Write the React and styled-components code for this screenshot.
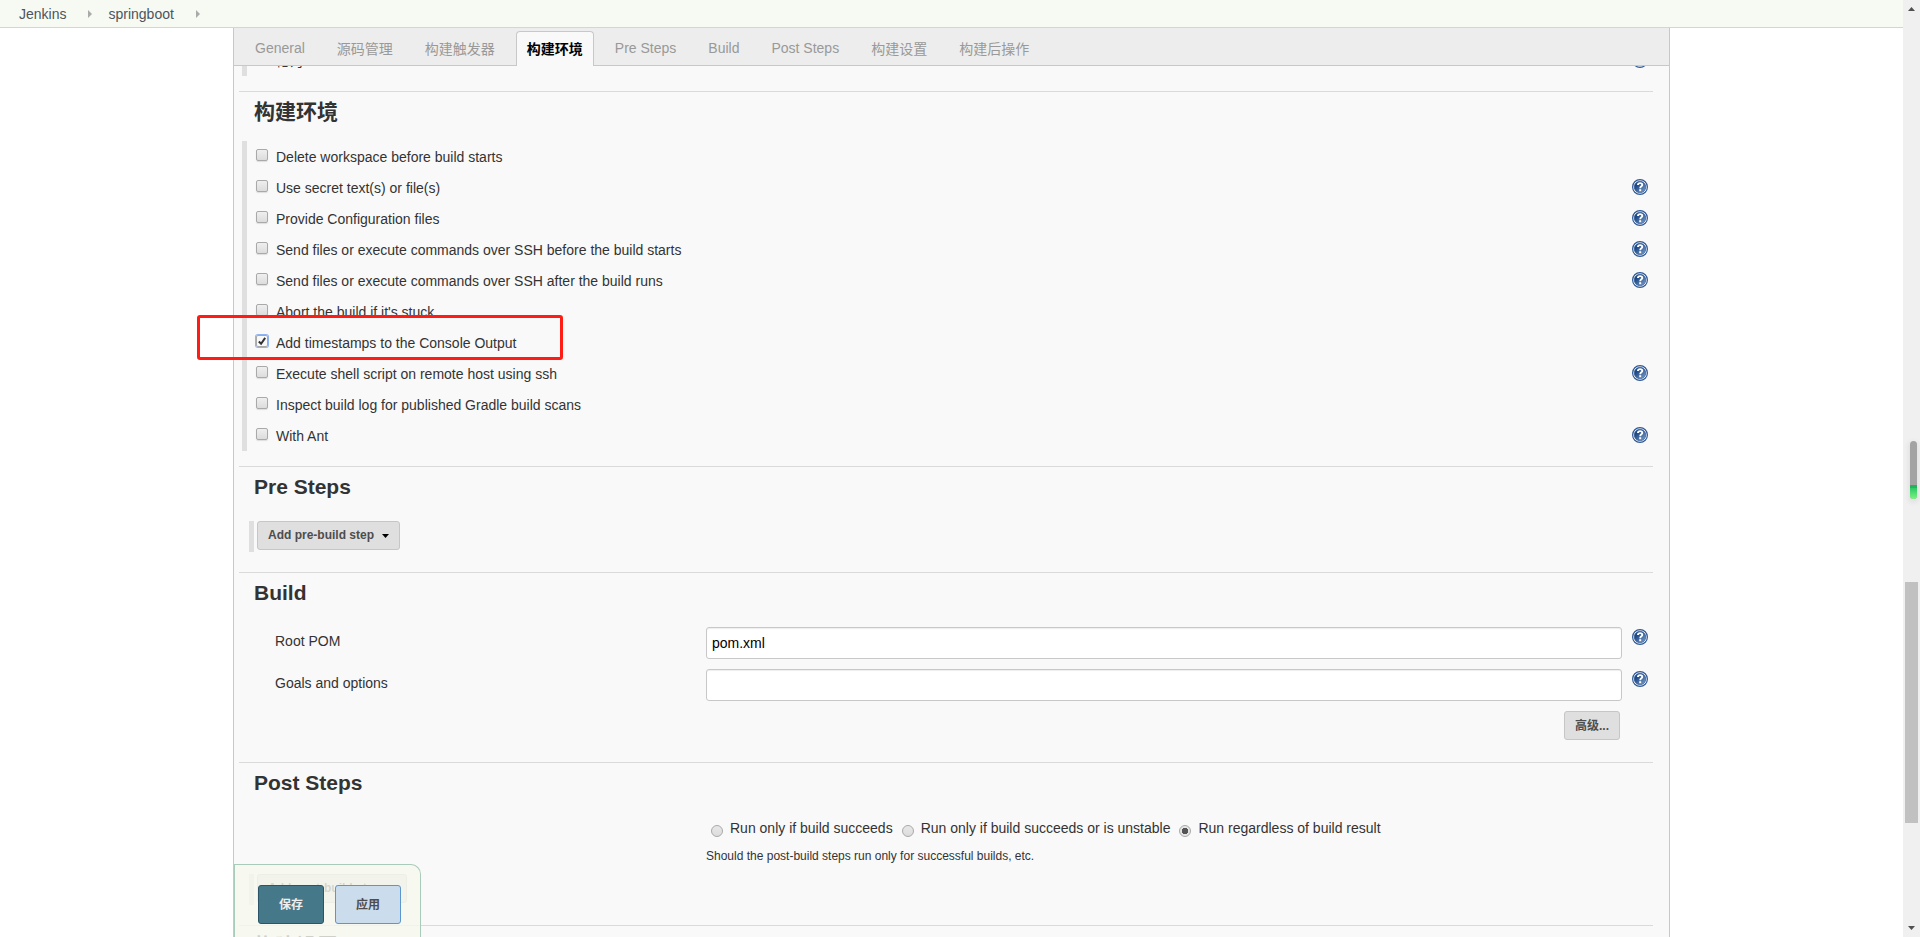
import React, { useState } from "react";
import styled, { createGlobalStyle } from "styled-components";

const tabs = [
  "General",
  "源码管理",
  "构建触发器",
  "构建环境",
  "Pre Steps",
  "Build",
  "Post Steps",
  "构建设置",
  "构建后操作",
];

const envOptions = [
  { id: "delete-ws", label: "Delete workspace before build starts" },
  { id: "secrets", label: "Use secret text(s) or file(s)", help: true },
  { id: "config-files", label: "Provide Configuration files", help: true },
  {
    id: "ssh-before",
    label: "Send files or execute commands over SSH before the build starts",
    help: true,
  },
  {
    id: "ssh-after",
    label: "Send files or execute commands over SSH after the build runs",
    help: true,
  },
  { id: "abort-stuck", label: "Abort the build if it's stuck" },
  {
    id: "timestamps",
    label: "Add timestamps to the Console Output",
    marked: true,
  },
  {
    id: "remote-shell",
    label: "Execute shell script on remote host using ssh",
    help: true,
  },
  {
    id: "gradle-scans",
    label: "Inspect build log for published Gradle build scans",
  },
  { id: "ant", label: "With Ant", help: true },
];

const runConditions = [
  { id: "success", label: "Run only if build succeeds" },
  { id: "unstable", label: "Run only if build succeeds or is unstable" },
  { id: "always", label: "Run regardless of build result" },
];

const HelpIcon = () => (
  <svg width="16" height="16" viewBox="0 0 16 16" aria-hidden="true">
    <defs>
      <linearGradient id="helpFill" x1="0" y1="0" x2="1" y2="1">
        <stop offset="0.3" stopColor="#204a87" />
        <stop offset="1" stopColor="#7fa3d0" />
      </linearGradient>
    </defs>
    <circle cx="8" cy="8" r="7.4" fill="#fff" stroke="#2f5896" strokeWidth="1.2" />
    <circle cx="8" cy="8" r="5.8" fill="url(#helpFill)" stroke="#24508f" strokeWidth="0.6" />
    <path
      d="M5.9 6.1C5.9 4.7 6.8 4.1 8.1 4.1C9.4 4.1 10.3 4.8 10.3 5.9C10.3 7.3 8.2 7.3 8.2 9.2"
      fill="none"
      stroke="#fff"
      strokeWidth="1.9"
    />
    <rect x="7.2" y="10.2" width="2" height="2" fill="#fff" />
  </svg>
);

const Help = ({ label }) => (
  <HelpButton type="button" aria-label={`Help: ${label}`}>
    <HelpIcon />
  </HelpButton>
);

const Arrow = ({ up, color = "#505050" }) => (
  <svg width="7" height="4" viewBox="0 0 7 4" aria-hidden="true">
    <path d={up ? "M0 4L3.5 0L7 4Z" : "M0 0L3.5 4L7 0Z"} fill={color} />
  </svg>
);

const App = () => {
  const [activeTab, setActiveTab] = useState("构建环境");
  const [checked, setChecked] = useState({ timestamps: true });
  const [runCondition, setRunCondition] = useState("always");
  const [pom, setPom] = useState("pom.xml");
  const [goals, setGoals] = useState("");

  const toggle = (id) => setChecked({ ...checked, [id]: !checked[id] });

  return (
    <>
      <GlobalStyle />
      <Screen>
        <Page>
          <Breadcrumbs>
            <a href="#jenkins">Jenkins</a>
            <Separator />
            <a href="#springboot">springboot</a>
            <Separator />
          </Breadcrumbs>

          <Panel>
            <TabBar>
              {tabs.map((tab) => (
                <Tab
                  key={tab}
                  type="button"
                  $active={tab === activeTab}
                  onClick={() => setActiveTab(tab)}
                >
                  {tab}
                </Tab>
              ))}
            </TabBar>

            <Config>
              <ScrolledRow>
                <OptionRow>
                  <OptionLabel as="span">轮询 SCM</OptionLabel>
                  <Help label="轮询 SCM" />
                </OptionRow>
              </ScrolledRow>

              <Section>
                <h2>构建环境</h2>
                <OptionGroup>
                  {envOptions.map(({ id, label, help, marked }) => (
                    <OptionRow key={id}>
                      <Checkbox
                        id={id}
                        type="checkbox"
                        $focused={marked}
                        checked={!!checked[id]}
                        onChange={() => toggle(id)}
                      />
                      <OptionLabel htmlFor={id}>{label}</OptionLabel>
                      {help && <Help label={label} />}
                      {marked && <Marker />}
                    </OptionRow>
                  ))}
                </OptionGroup>
              </Section>

              <Section>
                <h2>Pre Steps</h2>
                <StepGroup>
                  <GreyButton type="button">
                    Add pre-build step
                    <Arrow color="#000" />
                  </GreyButton>
                </StepGroup>
              </Section>

              <Section>
                <h2>Build</h2>
                <Fields>
                  <FieldRow>
                    <FieldLabel htmlFor="pom">Root POM</FieldLabel>
                    <TextInput
                      id="pom"
                      type="text"
                      value={pom}
                      onChange={(e) => setPom(e.target.value)}
                    />
                    <Help label="Root POM" />
                  </FieldRow>
                  <FieldRow>
                    <FieldLabel htmlFor="goals">Goals and options</FieldLabel>
                    <TextInput
                      id="goals"
                      type="text"
                      value={goals}
                      onChange={(e) => setGoals(e.target.value)}
                    />
                    <Help label="Goals and options" />
                  </FieldRow>
                  <Advanced>
                    <GreyButton type="button">高级...</GreyButton>
                  </Advanced>
                </Fields>
              </Section>

              <Section>
                <h2>Post Steps</h2>
                <Conditions>
                  {runConditions.map(({ id, label }) => (
                    <Condition key={id}>
                      <Radio
                        type="radio"
                        name="runCondition"
                        checked={runCondition === id}
                        onChange={() => setRunCondition(id)}
                      />
                      {label}
                    </Condition>
                  ))}
                </Conditions>
                <Hint>
                  Should the post-build steps run only for successful builds,
                  etc.
                </Hint>
                <StepGroup>
                  <GreyButton type="button">
                    Add post-build step
                    <Arrow color="#000" />
                  </GreyButton>
                </StepGroup>
              </Section>

              <Section>
                <h2>构建设置</h2>
              </Section>
            </Config>

            <SaveBar>
              <SaveButton type="button" $primary>
                保存
              </SaveButton>
              <SaveButton type="button">应用</SaveButton>
            </SaveBar>
          </Panel>
        </Page>

        <Scrollbar>
          <Arrow up />
          <Thumb />
          <Arrow />
          <Meter>
            <MeterLevel />
          </Meter>
        </Scrollbar>
      </Screen>
    </>
  );
};

export default App;

const GlobalStyle = createGlobalStyle`
  * {
    box-sizing: border-box;
  }

  body {
    margin: 0;
    background: #fff;
    color: #333;
    font-family: "Liberation Sans", "Noto Sans CJK SC", sans-serif;
    font-size: 14px;
    line-height: 20px;
  }

  button,
  input {
    margin: 0;
    font-family: inherit;
  }
`;

const Screen = styled.div`
  display: flex;
  height: 100vh;
  overflow: hidden;
`;

const Page = styled.div`
  flex: 1;
  min-width: 0;
  display: flex;
  flex-direction: column;
`;

const Breadcrumbs = styled.nav`
  flex: none;
  display: flex;
  align-items: center;
  height: 28px;
  padding: 0 19px;
  background: #f6faf2;
  border-bottom: 1px solid #d3d7cf;

  a {
    color: #4d545d;
    text-decoration: none;
  }
`;

const Separator = styled.span`
  margin: 0 16px 0 22px;
  border: 4px solid transparent;
  border-left-color: #aaa;
  border-right: none;
`;

const Panel = styled.main`
  position: relative;
  flex: 1;
  min-height: 0;
  display: flex;
  flex-direction: column;
  margin: 0 233px;
  background: #f9f9f9;
  border: 1px solid #c8c8c8;
  border-width: 0 1px;
`;

const TabBar = styled.div`
  flex: none;
  display: flex;
  align-items: flex-end;
  gap: 10px;
  height: 38px;
  padding: 0 10px;
  background: #ededed;
  border-bottom: 1px solid #c8c8c8;
`;

const Tab = styled.button`
  height: 35px;
  margin-bottom: -1px;
  padding: 0 10px 3px;
  background: ${({ $active }) => ($active ? "#f9f9f9" : "transparent")};
  border: 1px solid ${({ $active }) => ($active ? "#c8c8c8" : "transparent")};
  border-bottom: none;
  border-radius: 4px 4px 0 0;
  color: ${({ $active }) => ($active ? "#000" : "#999")};
  font-size: 14px;
  font-weight: ${({ $active }) => ($active ? "bold" : "normal")};
`;

const Config = styled.form`
  flex: 1;
  min-height: 0;
  overflow-y: clip;
  padding: 0 16px 0 5px;
`;

const OptionRow = styled.div`
  position: relative;
  display: flex;
  align-items: flex-start;
  height: 31px;
  padding: 6px 5px 0 9px;
`;

const ScrolledRow = styled.div`
  display: flex;
  align-items: flex-end;
  height: 10px;
  margin-left: 3px;
  overflow: hidden;
  border-left: 5px solid #dfdfdf;

  ${OptionRow} {
    flex: 1;
    padding-left: 28px;
  }
`;

const Section = styled.section`
  margin-top: 15px;
  border-top: 1px solid #dadada;

  h2 {
    margin: 0;
    padding: 5px 15px 14px;
    font-size: 21px;
    line-height: 30px;
  }
`;

const OptionGroup = styled.div`
  margin-left: 3px;
  border-left: 5px solid #dfdfdf;
`;

const OptionLabel = styled.label`
  flex: 1;
`;

const Checkbox = styled.input`
  appearance: none;
  width: 12px;
  height: 12px;
  margin: 2px 8px 0 0;
  background: linear-gradient(#efefef, #dcdcdc);
  border: 1px solid #a9a9a9;
  border-radius: 2px;
  box-shadow: ${({ $focused }) =>
    $focused ? "0 0 0 1px #8fb4f2" : "0 1px 1px #ddd"};

  &:checked {
    background-image: url("data:image/svg+xml,%3Csvg xmlns='http://www.w3.org/2000/svg' viewBox='0 0 11 11'%3E%3Cpath d='M2 6L4.5 8.5L9 2' fill='none' stroke='%23333' stroke-width='2.2'/%3E%3C/svg%3E");
  }
`;

const HelpButton = styled.button`
  flex: none;
  width: 16px;
  height: 16px;
  margin-top: 1px;
  padding: 0;
  background: none;
  border: none;

  svg {
    display: block;
  }
`;

const Marker = styled.div`
  position: absolute;
  top: -12px;
  left: -50px;
  width: 366px;
  height: 45px;
  border: 3px solid #ff1c14;
  border-radius: 3px;
  pointer-events: none;
`;

const StepGroup = styled.div`
  display: flex;
  height: 31px;
  margin: 5px 0 20px 10px;
  padding-left: 3px;
  border-left: 5px solid #dfdfdf;
`;

const GreyButton = styled.button`
  display: flex;
  align-items: center;
  gap: 8px;
  height: 29px;
  padding: 0 10px 2px;
  background: #dfdfdf;
  border: 1px solid #c6c6c6;
  border-radius: 3px;
  color: #4d4d4d;
  font-size: 12px;
  font-weight: bold;

  svg {
    margin-top: 2px;
  }
`;

const Fields = styled.div`
  display: flex;
  flex-direction: column;
  gap: 10px;
  margin-bottom: 22px;
  padding: 5px 5px 0 36px;
`;

const FieldRow = styled.div`
  display: grid;
  grid-template-columns: 431px 1fr 16px;
  align-items: start;

  ${HelpButton} {
    margin-top: 2px;
  }
`;

const FieldLabel = styled.label`
  padding-top: 4px;
`;

const TextInput = styled.input`
  height: 32px;
  margin-right: 10px;
  padding: 0 5px;
  background: #fff;
  border: 1px solid #c8c8c8;
  border-radius: 3px;
  box-shadow: inset 0 1px 1px #eee;
  color: #000;
  font-size: 14px;
`;

const Advanced = styled.div`
  display: flex;
  justify-content: flex-end;
  margin-right: 28px;
`;

const Conditions = styled.div`
  display: flex;
  align-items: center;
  gap: 9px;
  margin: 6px 0 0 472px;
`;

const Condition = styled.label`
  display: flex;
  align-items: flex-start;
  gap: 7px;
`;

const Radio = styled.input`
  appearance: none;
  width: 12px;
  height: 12px;
  margin-top: 7px;
  background: ${({ checked }) =>
    checked
      ? "radial-gradient(circle, #555 0 3px, #e6e6e6 3px)"
      : "linear-gradient(#e8e8e8, #dcdcdc)"};
  border: 1px solid #a9a9a9;
  border-radius: 50%;
`;

const Hint = styled.p`
  margin: 9px 0 9px 467px;
  font-size: 12px;
  line-height: 18px;
`;

const SaveBar = styled.div`
  position: absolute;
  left: 0;
  bottom: 0;
  display: flex;
  gap: 11px;
  padding: 20px 19px 13px 23px;
  background: rgba(246, 249, 239, 0.8);
  border: 1px solid #a9cbb9;
  border-bottom: none;
  border-radius: 0 10px 0 0;
`;

const SaveButton = styled.button`
  width: 66px;
  height: 39px;
  padding: 0 0 3px;
  background: ${({ $primary }) => ($primary ? "#457889" : "#cbdced")};
  border: 1px solid ${({ $primary }) => ($primary ? "#2b5566" : "#5c96cf")};
  border-radius: 3px;
  color: ${({ $primary }) => ($primary ? "#eee" : "#4d4d4d")};
  font-size: 12px;
  font-weight: bold;
`;

const Scrollbar = styled.div`
  position: relative;
  flex: none;
  display: flex;
  flex-direction: column;
  align-items: center;
  justify-content: space-between;
  width: 17px;
  padding: 7px 0;
  background: #f0f0f0;
`;

const Thumb = styled.div`
  width: 13px;
  height: 241px;
  margin-top: 468px;
  background: #c1c1c1;
`;

const Meter = styled.div`
  position: absolute;
  top: 441px;
  right: 3px;
  display: flex;
  align-items: flex-end;
  width: 7px;
  height: 58px;
  overflow: hidden;
  background: #a3a3a3;
  border-radius: 4px;
  box-shadow: 0 2px 4px 2px #e2e2e2;
`;

const MeterLevel = styled.div`
  width: 100%;
  height: 14px;
  background: linear-gradient(#2ec866, #7cf582);
  border-top: 3px solid #22b45c;
`;
